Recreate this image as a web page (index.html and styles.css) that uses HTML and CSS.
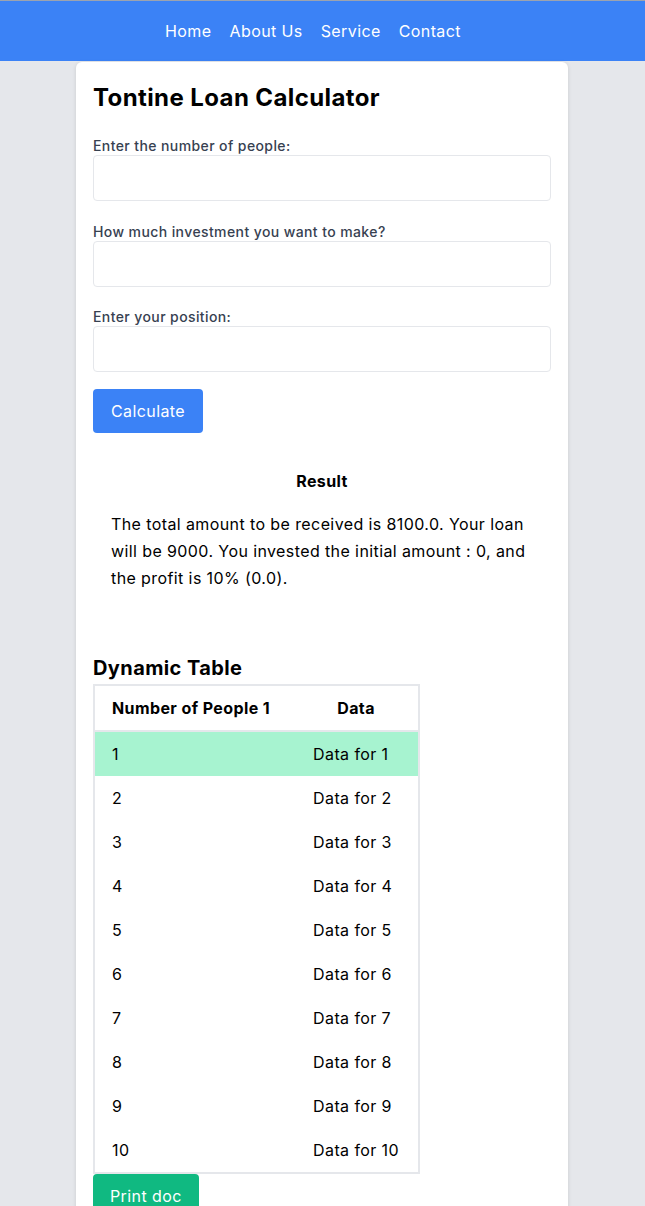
FILE: index.html
```html
<!DOCTYPE html>
<html>
<head>
<meta charset="utf-8">
<link rel="stylesheet" href="styles.css">
</head>
<body>
<nav class="nav">
  <a href="#">Home</a>
  <a href="#">About Us</a>
  <a href="#">Service</a>
  <a href="#">Contact</a>
</nav>
<main class="card">
  <h1 class="title">Tontine Loan Calculator</h1>
  <div class="field">
    <label class="label">Enter the number of people:</label>
    <input class="input" type="text">
  </div>
  <div class="field">
    <label class="label">How much investment you want to make?</label>
    <input class="input" type="text">
  </div>
  <div class="field">
    <label class="label">Enter your position:</label>
    <input class="input" type="text">
  </div>
  <button class="btn btn-blue">Calculate</button>
  <section class="result">
    <h3 class="result-title">Result</h3>
    <p class="result-text">The total amount to be received is 8100.0. Your loan will be 9000. You invested the initial amount : 0, and the profit is 10% (0.0).</p>
  </section>
  <h2 class="table-title">Dynamic Table</h2>
  <table class="table">
    <thead>
      <tr><th class="th-left">Number of People 1</th><th>Data</th></tr>
    </thead>
    <tbody>
      <tr class="active"><td>1</td><td>Data for 1</td></tr>
      <tr><td>2</td><td>Data for 2</td></tr>
      <tr><td>3</td><td>Data for 3</td></tr>
      <tr><td>4</td><td>Data for 4</td></tr>
      <tr><td>5</td><td>Data for 5</td></tr>
      <tr><td>6</td><td>Data for 6</td></tr>
      <tr><td>7</td><td>Data for 7</td></tr>
      <tr><td>8</td><td>Data for 8</td></tr>
      <tr><td>9</td><td>Data for 9</td></tr>
      <tr><td>10</td><td>Data for 10</td></tr>
    </tbody>
  </table>
  <button class="btn btn-green">Print doc</button>
</main>
</body>
</html>
```
FILE: styles.css
```css
* { box-sizing: border-box; }
html, body { margin: 0; padding: 0; }
body {
  background: #e5e7eb;
  font-family: Inter, "Liberation Sans", sans-serif;
  letter-spacing: 0.025em;
  color: #000;
  border-top: 1px solid #9ca3af;
}
.nav {
  background: #3b82f6;
  height: 60px;
  display: flex;
  justify-content: center;
  align-items: center;
  gap: 18px;
  padding-right: 19px;
}
.nav a {
  color: #fff;
  text-decoration: none;
  font-size: 16px;
  line-height: 24px;
}
.card {
  width: 492px;
  margin: 1px 0 0 76px;
  background: #fff;
  border-radius: 6px;
  box-shadow: 0 1px 4px rgba(0,0,0,0.12);
  padding: 20px 17px 40px;
}
.title {
  font-size: 24px;
  line-height: 32px;
  font-weight: 700;
  margin: 0 0 20px;
}
.field { margin-bottom: 18.5px; }
.label {
  display: block;
  font-size: 14px;
  line-height: 24px;
  font-weight: 500;
  color: #374151;
  margin-bottom: -3px;
}
.input {
  display: block;
  width: 100%;
  height: 46px;
  border: 1px solid #e5e7eb;
  border-radius: 4px;
  background: #fff;
  margin: 0;
}
.btn {
  display: block;
  border: 0;
  color: #fff;
  font-family: Inter, "Liberation Sans", sans-serif;
  letter-spacing: 0.025em;
  font-size: 16px;
  line-height: 24px;
  padding: 10px 18px;
  border-radius: 4px;
}
.btn-blue { background: #3b82f6; margin-top: -1.5px; }
.btn-green { background: #10b981; padding: 10px 17px; }
.result {
  padding: 36px 18px 0;
}
.result-title {
  text-align: center;
  font-size: 16px;
  line-height: 24px;
  font-weight: 700;
  margin: 0 0 18px;
}
.result-text {
  font-size: 16px;
  line-height: 27px;
  margin: 0;
}
.table-title {
  font-size: 20px;
  line-height: 28px;
  font-weight: 700;
  margin: 62px 0 2px;
}
.table {
  border-collapse: collapse;
  border: 2px solid #e5e7eb;
}
.table th, .table td {
  padding: 10px 19px 10px 17px;
  font-size: 16px;
  line-height: 24px;
  text-align: left;
}
.table th {
  font-weight: 700;
  text-align: center;
  border-bottom: 2px solid #e5e7eb;
}
.table th.th-left { text-align: left; padding-right: 26px; }
.table tr.active td { background: #a7f3d0; }
```
